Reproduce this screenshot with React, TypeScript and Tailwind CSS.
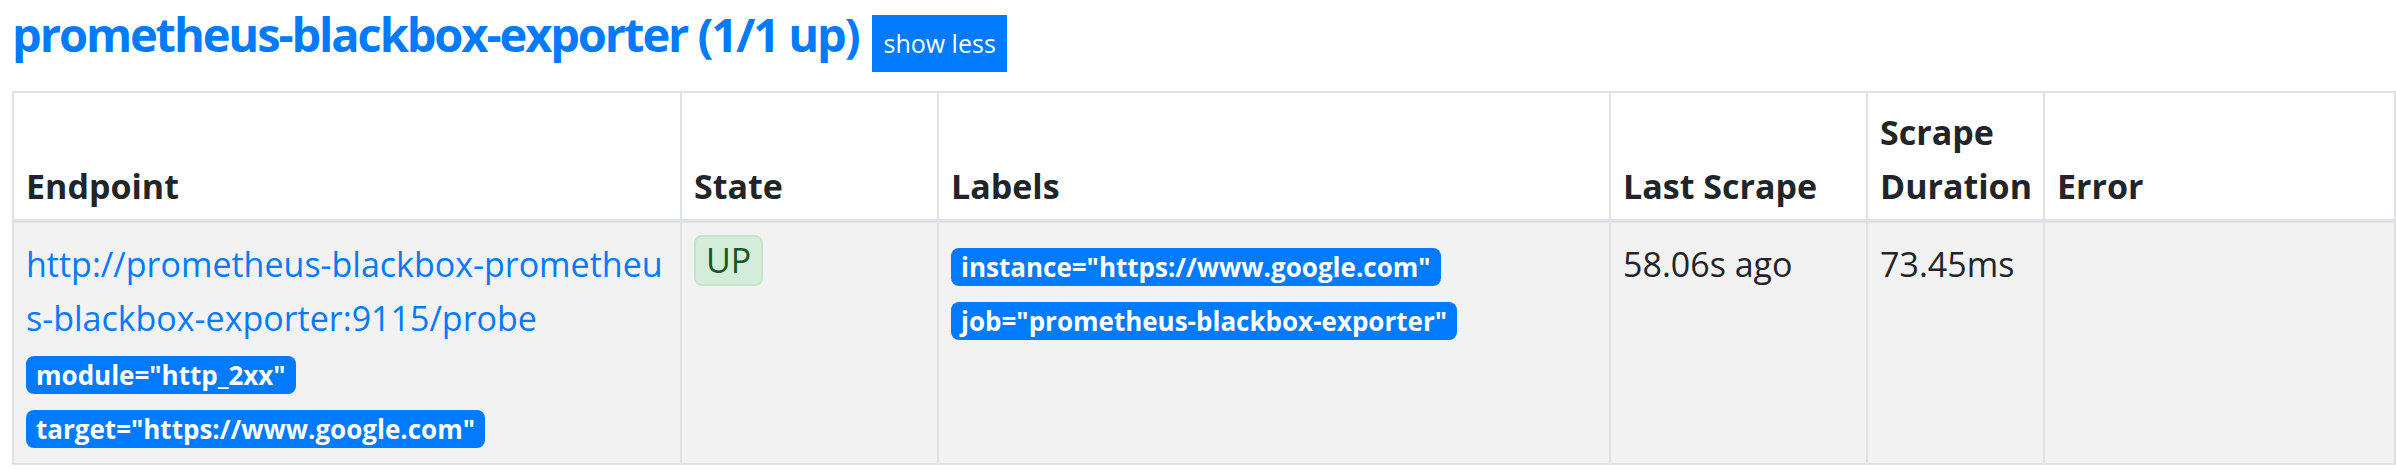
const badge =
  "inline-block rounded-[8px] bg-[#007bff] px-[10px] py-[6px] align-baseline text-[26px] leading-none font-bold whitespace-nowrap text-white";

const th =
  "border-2 border-b-4 border-[#dee2e6] px-[12px] pt-[12px] pb-[6px] text-left align-bottom font-bold";
const td = "border-2 border-[#dee2e6] px-[12px] pt-[14px] pb-[10px] align-top";

export default function App() {
  return (
    <div className="min-h-[470px] bg-white pl-[12px] font-['Open_Sans',sans-serif] text-[#212529]">
      <div className="flex items-start gap-[14px]">
        <h2 className="mt-[5px] text-[47px] leading-[58px] font-bold tracking-[-2.1px] text-[#007bff]">
          prometheus-blackbox-exporter (1/1 up)
        </h2>
        <button className="mt-[15px] h-[57px] bg-[#007bff] px-[11px] text-[25px] leading-none text-white">
          show less
        </button>
      </div>

      <table className="mt-[19px] w-[2384px] table-fixed border-collapse text-[34px] leading-[54px]">
        <colgroup>
          <col className="w-[668px]" />
          <col className="w-[257px]" />
          <col className="w-[672px]" />
          <col className="w-[257px]" />
          <col className="w-[177px]" />
          <col />
        </colgroup>
        <thead>
          <tr>
            <th className={th}>Endpoint</th>
            <th className={th}>State</th>
            <th className={th}>Labels</th>
            <th className={th}>Last Scrape</th>
            <th className={th}>Scrape Duration</th>
            <th className={th}>Error</th>
          </tr>
        </thead>
        <tbody>
          <tr className="bg-[#f2f2f2]">
            <td className={td}>
              <a href="#" className="whitespace-nowrap text-[#007bff]">
                http://prometheus-blackbox-prometheu
                <br />
                s-blackbox-exporter:9115/probe
              </a>
              <div>
                <span className={badge}>module="http_2xx"</span>
              </div>
              <div>
                <span className={badge}>target="https://www.google.com"</span>
              </div>
            </td>
            <td className={td}>
              <span className="-mt-[2px] block w-fit rounded-[8px] border-2 border-[#c3e6cb] bg-[#d4edda] px-[10px] leading-[47px] text-[#155724]">
                UP
              </span>
            </td>
            <td className={td}>
              <div>
                <span className={badge}>instance="https://www.google.com"</span>
              </div>
              <div>
                <span className={badge}>job="prometheus-blackbox-exporter"</span>
              </div>
            </td>
            <td className={td}>58.06s ago</td>
            <td className={td}>73.45ms</td>
            <td className={td}></td>
          </tr>
        </tbody>
      </table>
    </div>
  );
}
